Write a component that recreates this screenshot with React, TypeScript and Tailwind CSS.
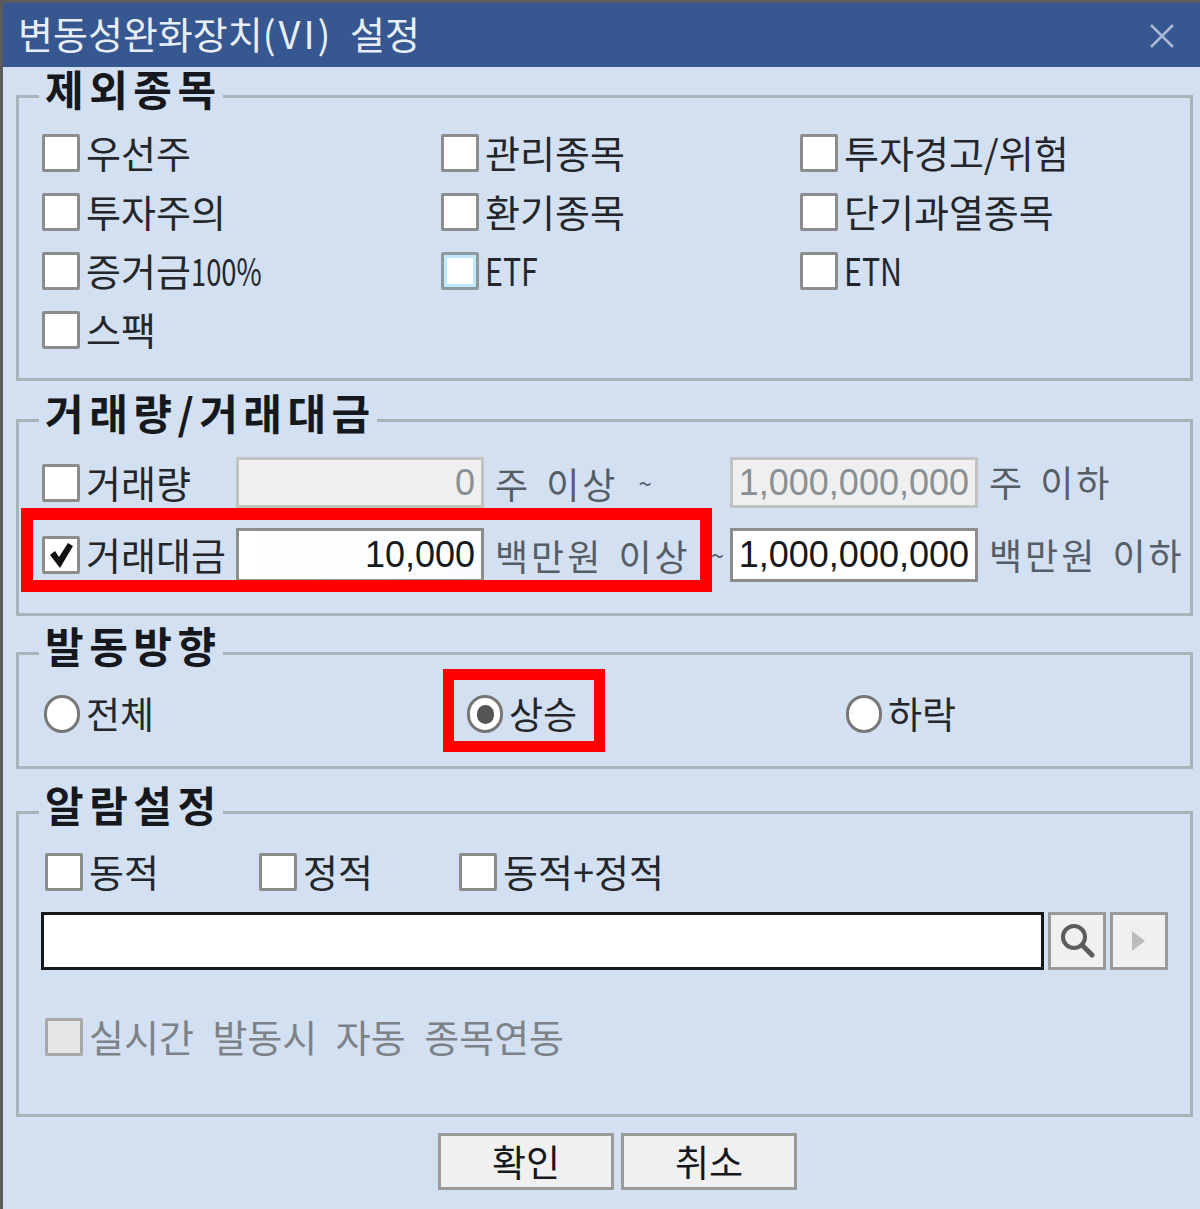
import type { ReactNode } from "react";

function Narrow({ children, scale }: { children: ReactNode; scale: string }) {
  return <span className={`inline-block origin-left ${scale}`}>{children}</span>;
}

function Check({ label, checked, tone, disabled }: { label: ReactNode; checked?: boolean; tone?: "focus"; disabled?: boolean }) {
  return (
    <div className="flex items-center h-[38px] gap-[6px]">
      <div className={`w-[38px] h-[38px] shrink-0 flex items-center justify-center border-[3px] rounded-[2px] ${
        disabled ? "border-[#a8a8a8] bg-[#e6e6e6]" : tone === "focus" ? "border-[#8f9aa0] bg-white shadow-[inset_0_0_0_3px_#bfe9fb]" : "border-[#8c8c8c] bg-white"
      }`}>
        {checked && (
          <svg width="26" height="28" viewBox="0 0 26 28">
            <path d="M2 14 L7 10 L11 16 L20 2 L25 5 L12 27 Z" fill="#111" />
          </svg>
        )}
      </div>
      <span className={`text-[38px] leading-none mb-[2px] whitespace-nowrap ${disabled ? "text-[#7c8288] [word-spacing:10px]" : "text-[#23272b]"}`}>{label}</span>
    </div>
  );
}

function Radio({ label, checked }: { label: string; checked?: boolean }) {
  return (
    <div className="flex items-center h-[38px] gap-[6px]">
      <div className="w-[36px] h-[38px] shrink-0 rounded-full border-[3px] border-[#777] bg-white flex items-center justify-center">
        {checked && <div className="w-[17px] h-[19px] rounded-full bg-[#555]" />}
      </div>
      <span className="text-[37px] leading-none mb-[2px] whitespace-nowrap text-[#23272b]">{label}</span>
    </div>
  );
}

function Group({ title, className, children }: { title: string; className: string; children: ReactNode }) {
  return (
    <div className={`relative shrink-0 border-[3px] border-[#a7b4ba] ${className}`}>
      <div className="absolute left-[20px] top-[-29px] pl-[6px] pr-[1px] bg-[#d3e0f1] text-[42px] leading-[38px] font-bold tracking-[5.5px] text-[#15181c] whitespace-nowrap">{title}</div>
      {children}
    </div>
  );
}

function Field({ value, disabled, plain }: { value: string; disabled?: boolean; plain?: boolean }) {
  return (
    <div className={`w-[248px] flex items-center justify-end pr-[6px] border-[3px] text-[36px] leading-none font-['Liberation_Sans',sans-serif] ${
      disabled ? "h-[51px] border-[#c2c2c2] bg-[#efefef] text-[#8a8f94]"
        : plain ? "h-[54px] border-[#8d8d8d] bg-white text-[#15181c]"
        : "h-[54px] border-[#8d8d8d] bg-gradient-to-r from-white to-[#fafcff] text-[#15181c]"
    }`}>
      {value}
    </div>
  );
}

function Unit({ children }: { children: ReactNode }) {
  return <span className="text-[36px] leading-none tracking-[3px] [word-spacing:4px] text-[#555d66] whitespace-nowrap">{children}</span>;
}

export default function App() {
  return (
    <div className="w-[1200px] h-[1209px] overflow-hidden flex flex-col bg-[#d3e0f1] border-l-[3px] border-t-[3px] border-[#5b5b5b] font-['Noto_Sans_CJK_KR','Liberation_Sans',sans-serif]">
      {/* Title bar */}
      <div className="h-[64px] shrink-0 flex items-center justify-between pl-[15px] pr-[24px] bg-[#36578f]">
        <span className="text-[38px] leading-none mb-[4px] text-[#e8eef6] [word-spacing:8px] whitespace-nowrap">
          변동성완화장치<span className="tracking-[3px]">(VI)</span> 설정
        </span>
        <svg width="28" height="28" viewBox="0 0 28 28" className="mt-[2px]">
          <path d="M3 3 L25 25 M25 3 L3 25" stroke="#a9bad6" strokeWidth="2.5" />
        </svg>
      </div>

      <div className="flex flex-col flex-1 pl-[13px] pr-[7px]">
        {/* 제외종목 */}
        <Group title="제외종목" className="h-[286px] mt-[28px] pt-[36px] pl-[23px]">
          <div className="grid grid-cols-[399px_359px_1fr] auto-rows-[38px] gap-y-[21px]">
            <Check label="우선주" />
            <Check label="관리종목" />
            <Check label="투자경고/위험" />
            <Check label="투자주의" />
            <Check label="환기종목" />
            <Check label="단기과열종목" />
            <Check label={<>증거금<Narrow scale="scale-x-[0.72]">100%</Narrow></>} />
            <Check label={<Narrow scale="scale-x-[0.8]">ETF</Narrow>} tone="focus" />
            <Check label={<Narrow scale="scale-x-[0.8]">ETN</Narrow>} />
            <Check label="스팩" />
          </div>
        </Group>

        {/* 거래량/거래대금 */}
        <Group title="거래량/거래대금" className="h-[197px] mt-[38px] pt-[35px] pl-[23px]">
          <div className="flex flex-col gap-[20px]">
            <div className="grid grid-cols-[194px_248px_246px_248px_1fr] items-center">
              <Check label="거래량" />
              <Field value="0" disabled />
              <div className="pl-[11px] flex items-center">
                <Unit>주 이상</Unit>
                <span className="ml-[20px] text-[24px] leading-none text-[#555d66]">~</span>
              </div>
              <Field value="1,000,000,000" disabled />
              <div className="pl-[11px]"><Unit>주 이하</Unit></div>
            </div>
            <div className="grid grid-cols-[194px_248px_246px_248px_1fr] items-center">
              <Check label="거래대금" checked />
              <Field value="10,000" />
              <div className="pl-[11px] flex items-center">
                <Unit>백만원 이상</Unit>
                <span className="ml-[20px] text-[24px] leading-none text-[#555d66]">~</span>
              </div>
              <Field value="1,000,000,000" plain />
              <div className="pl-[11px]"><Unit>백만원 이하</Unit></div>
            </div>
          </div>
          <div className="absolute left-[2px] top-[86px] w-[691px] h-[84px] border-[12px] border-[#fe0000]" />
        </Group>

        {/* 발동방향 */}
        <Group title="발동방향" className="h-[117px] mt-[36px] pt-[40px] pl-[25px]">
          <div className="grid grid-cols-[423px_379px_1fr]">
            <Radio label="전체" />
            <Radio label="상승" checked />
            <Radio label="하락" />
          </div>
          <div className="absolute left-[424px] top-[14px] w-[162px] h-[83px] border-[11px] border-[#fe0000]" />
        </Group>

        {/* 알람설정 */}
        <Group title="알람설정" className="h-[306px] mt-[42px] pt-[39px] pl-[22px]">
          <div className="flex flex-col pl-[4px]">
            <div className="flex">
              <div className="w-[214px]"><Check label="동적" /></div>
              <div className="w-[200px]"><Check label="정적" /></div>
              <Check label="동적+정적" />
            </div>
          </div>
          <div className="flex mt-[21px] gap-[4px]">
            <div className="w-[1003px] h-[58px] border-[3px] border-[#15181c] bg-white" />
            <div className="w-[58px] h-[58px] border-[3px] border-[#9a9a9a] bg-[#f0f0f0] flex items-center justify-center">
              <svg width="36" height="36" viewBox="0 0 36 36" fill="none">
                <circle cx="15" cy="14" r="11" stroke="#5c5c5c" strokeWidth="4" />
                <path d="M23 22 L33 32" stroke="#5c5c5c" strokeWidth="5" strokeLinecap="round" />
              </svg>
            </div>
            <div className="w-[58px] h-[58px] border-[3px] border-[#9a9a9a] bg-[#f0f0f0] flex items-center justify-center">
              <svg width="16" height="22" viewBox="0 0 16 22">
                <path d="M1 1 L14 11 L1 21 Z" fill="#bcbcbc" />
              </svg>
            </div>
          </div>
          <div className="pl-[4px] mt-[48px]">
            <Check label="실시간 발동시 자동 종목연동" disabled />
          </div>
        </Group>

        {/* Buttons */}
        <div className="flex justify-center gap-[7px] mt-[16px] pl-[26px]">
          {["확인", "취소"].map((b) => (
            <div key={b} className="w-[176px] h-[57px] flex items-center justify-center border-[3px] border-[#9a9a9a] bg-[#f0f0f0] text-[37px] leading-none text-[#15181c]">{b}</div>
          ))}
        </div>
      </div>
    </div>
  );
}
